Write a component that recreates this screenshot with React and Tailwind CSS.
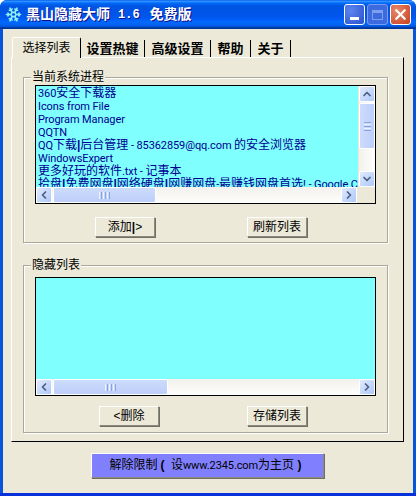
import { ChevronLeft, ChevronRight, ChevronUp, ChevronDown, Snowflake, X } from "lucide-react";

const FONT = "font-['Liberation_Sans','Noto_Sans_CJK_SC',sans-serif]";

// latin runs in the picture are narrower than Arial at 12px
const Latin = ({ children }) => (
    <span className="font-['Roboto','Liberation_Sans',sans-serif] text-[11px] tracking-[-0.1px]">{children}</span>
);

const processes = [
    <><Latin>360</Latin>安全下载器</>,
    <Latin>Icons from File</Latin>,
    <Latin>Program Manager</Latin>,
    <Latin>QQTN</Latin>,
    <><Latin>QQ</Latin>下载<b>|</b>后台管理<Latin> - 85362859@qq.com </Latin>的安全浏览器</>,
    <Latin>WindowsExpert</Latin>,
    <>更多好玩的软件<Latin>.txt - </Latin>记事本</>,
    <>拾盘<b>|</b>免费网盘<b>|</b>网络硬盘<b>|</b>网赚网盘<Latin>-</Latin>最赚钱网盘首选<Latin>! - Google Chrome</Latin></>,
];

const ScrollButton = ({ icon: Icon }) => (
    <div className="w-[16px] h-[16px] rounded-[2px] border border-white bg-gradient-to-br from-[#e1eafe] to-[#aec8f7] flex items-center justify-center">
        <Icon size={12} strokeWidth={3.5} className="text-[#4d6185]" />
    </div>
);

const HScrollBar = ({ thumb, className = "" }) => (
    <div className={`${className} flex h-[16px] bg-gradient-to-b from-[#f3f1ec] to-[#fefefe]`}>
        <ScrollButton icon={ChevronLeft} />
        <div className={`${thumb} ml-[1px] rounded-[2px] border border-white bg-gradient-to-b from-[#cddcfb] to-[#bccffa] flex items-center justify-center gap-[1px]`}>
            <div className="w-[1px] h-[7px] bg-[#eef4fe]" />
            <div className="w-[1px] h-[7px] bg-[#8ca5e0]" />
            <div className="w-[1px] h-[7px] bg-[#eef4fe]" />
            <div className="w-[1px] h-[7px] bg-[#8ca5e0]" />
            <div className="w-[1px] h-[7px] bg-[#eef4fe]" />
            <div className="w-[1px] h-[7px] bg-[#8ca5e0]" />
        </div>
        <div className="flex-1" />
        <ScrollButton icon={ChevronRight} />
    </div>
);

const VScrollBar = () => (
    <div className="flex flex-col w-[16px] ml-[1px] bg-gradient-to-r from-[#f3f1ec] to-[#fefefe]">
        <ScrollButton icon={ChevronUp} />
        <div className="h-[46px] mt-[1px] rounded-[2px] border border-white bg-gradient-to-r from-[#cddcfb] to-[#bccffa] flex flex-col items-center justify-center gap-[1px]">
            <div className="w-[7px] h-[1px] bg-[#8ca5e0]" />
            <div className="w-[7px] h-[1px] bg-[#eef4fe]" />
            <div className="w-[7px] h-[1px] bg-[#8ca5e0]" />
            <div className="w-[7px] h-[1px] bg-[#eef4fe]" />
            <div className="w-[7px] h-[1px] bg-[#8ca5e0]" />
        </div>
        <div className="flex-1" />
        <ScrollButton icon={ChevronDown} />
    </div>
);

const RaisedButton = ({ children }) => (
    <button className="w-[60px] h-[20px] border border-t-white border-l-white border-r-[#8c8a7e] border-b-[#8c8a7e] shadow-[1px_1px_0_#716f64] bg-[#ece9d8] text-[12px] leading-none text-black whitespace-pre">
        {children}
    </button>
);

const Tab = ({ label, className }) => (
    <div className={`${className} h-[17px] mt-[3px] border-r border-r-black flex items-center justify-center text-[13px] font-bold text-black`}>
        {label}
    </div>
);

const GroupBox = ({ title, className, children }) => (
    <fieldset className={`${className} ml-[11px] w-[365px] border border-[#aca899] shadow-[inset_1px_1px_0_#fff,1px_1px_0_#fff] px-[11px]`}>
        <legend className="-ml-[4px] px-[1px] bg-[#ece9d8] text-[12px] leading-[12px] text-black">{title}</legend>
        {children}
    </fieldset>
);

const App = () => {
    return (
        <div className={`${FONT} w-[416px] h-[496px] flex flex-col rounded-t-[7px] bg-[#0855dd] border-b-[3px] border-b-[#0831d9] overflow-hidden`}>
            {/* Title bar */}
            <div className="h-[29px] shrink-0 flex items-center pl-[5px] pr-[5px] bg-[linear-gradient(180deg,#0058ee_0%,#3593ff_4%,#288eff_6%,#127dff_8%,#036ffc_10%,#0262ee_14%,#0057e5_20%,#0054e3_24%,#0055eb_56%,#005bf5_66%,#026afe_76%,#0062ef_86%,#0052d6_92%,#0040ab_94%,#003092_100%)]">
                <Snowflake size={17} strokeWidth={2.2} className="text-[#8ff0f5]" />
                <div className="ml-[4px] flex-1 flex items-center text-[14px] font-bold text-white whitespace-pre [text-shadow:1px_1px_#0f1089]">
                    黑山隐藏大师<span className="font-['Liberation_Mono'] text-[12px] ml-[8px] mr-[10px]">1.6</span>免费版
                </div>
                <div className="flex gap-[2px]">
                    <div className="w-[21px] h-[21px] rounded-[3px] border border-white bg-[radial-gradient(circle_at_30%_30%,#5d86ee,#2a50cf)] flex items-end pl-[5px] pb-[4px]">
                        <div className="w-[9px] h-[3px] bg-white" />
                    </div>
                    <div className="w-[21px] h-[21px] rounded-[3px] border border-[#7a9cf0] bg-[#3c6be0] flex items-center justify-center">
                        <div className="w-[11px] h-[10px] border border-t-[3px] border-[#7e9ff0]" />
                    </div>
                    <div className="w-[21px] h-[21px] rounded-[3px] border border-white bg-[radial-gradient(circle_at_30%_30%,#e8886a,#c8401c)] flex items-center justify-center">
                        <X size={17} strokeWidth={3.2} className="text-white" />
                    </div>
                </div>
            </div>

            {/* Client area */}
            <div className="flex-1 mx-[3px] bg-[#ece9d8] px-[8px] pt-[8px]">
                {/* Tab strip */}
                <div className="flex h-[20px] pl-[1px]">
                    <div className="w-[69px] h-[21px] relative z-10 bg-[#ece9d8] border-t border-l border-white rounded-t-[2px] border-r border-r-black flex items-center justify-center text-[12px] text-black">
                        选择列表
                    </div>
                    <Tab label="设置热键" className="w-[64px]" />
                    <Tab label="高级设置" className="w-[66px]" />
                    <Tab label="帮助" className="w-[40px]" />
                    <Tab label="关于" className="w-[40px]" />
                </div>

                {/* Tab page */}
                <div className="w-[393px] h-[385px] border-t border-l border-t-white border-l-white border-r border-b border-r-black border-b-black pt-[13px] flex flex-col">
                    <GroupBox title="当前系统进程" className="h-[172px] pt-[2px]">
                        <div className="w-[341px] h-[119px] border border-black grid grid-cols-[1fr_17px] grid-rows-[1fr_16px]">
                            <div className="bg-[#80ffff] overflow-hidden pl-[2px] pt-[1px] text-[12px] leading-[13px] text-[#000090] whitespace-nowrap">
                                {processes.map((name, index) => (
                                    <div key={index} className="h-[13px]">{name}</div>
                                ))}
                            </div>
                            <VScrollBar />
                            <HScrollBar thumb="w-[103px]" className="mr-[1px]" />
                            <div className="bg-[#ece9d8]" />
                        </div>
                        <div className="flex justify-between pl-[60px] pr-[69px] pt-[13px]">
                            <RaisedButton>添加<b>|</b>&gt;</RaisedButton>
                            <RaisedButton>刷新列表</RaisedButton>
                        </div>
                    </GroupBox>

                    <GroupBox title="隐藏列表" className="h-[174px] mt-[16px] pt-[6px]">
                        <div className="w-[341px] h-[119px] border border-black flex flex-col">
                            <div className="flex-1 bg-[#80ffff]" />
                            <HScrollBar thumb="w-[115px]" />
                        </div>
                        <div className="flex justify-between pl-[64px] pr-[69px] pt-[10px]">
                            <RaisedButton>&lt;删除</RaisedButton>
                            <RaisedButton>存储列表</RaisedButton>
                        </div>
                    </GroupBox>
                </div>

                {/* Bottom action */}
                <div className="flex pt-[11px] pl-[80px]">
                    <button className="w-[233px] h-[25px] pr-[4px] border border-t-white border-l-white border-r-[#8c8a7e] border-b-[#8c8a7e] shadow-[1px_1px_0_#716f64] bg-[#8080ff] text-[12px] text-black whitespace-pre">
                        解除限制<b className="mx-[3px]">(</b> 设<Latin>www.2345.com</Latin>为主页 <b>)</b>
                    </button>
                </div>
            </div>
        </div>
    );
};

export default App;
